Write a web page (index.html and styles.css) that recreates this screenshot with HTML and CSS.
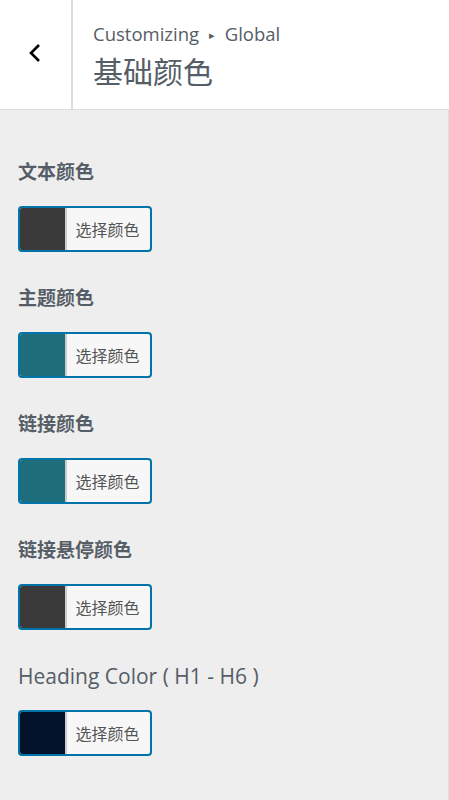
FILE: index.html
```html
<!DOCTYPE html>
<html lang="zh-CN">

<head>
    <meta charset="UTF-8">
    <meta name="viewport" content="width=device-width, initial-scale=1.0">
    <title>基础颜色</title>
    <link rel="stylesheet" href="styles.css">
</head>

<body>
<div class="panel">
    <div class="panel-header">
        <button class="back" type="button" aria-label="返回">
            <svg width="14" height="20" viewBox="0 0 14 20">
                <path d="M11 2 L3 10 L11 18" fill="none" stroke="#000" stroke-width="2.6"/>
            </svg>
        </button>
        <div class="panel-title">
            <div class="crumb">Customizing <span class="sep">&#9656;</span> Global</div>
            <h1>基础颜色</h1>
        </div>
    </div>

    <div class="controls">
        <div class="control">
            <div class="control-label">文本颜色</div>
            <button class="color-result" type="button">
                <span class="swatch" style="background-color: #3a3a3a"></span>
                <span class="color-text">选择颜色</span>
            </button>
        </div>

        <div class="control">
            <div class="control-label">主题颜色</div>
            <button class="color-result" type="button">
                <span class="swatch" style="background-color: #1e6d7b"></span>
                <span class="color-text">选择颜色</span>
            </button>
        </div>

        <div class="control">
            <div class="control-label">链接颜色</div>
            <button class="color-result" type="button">
                <span class="swatch" style="background-color: #1e6d7b"></span>
                <span class="color-text">选择颜色</span>
            </button>
        </div>

        <div class="control">
            <div class="control-label">链接悬停颜色</div>
            <button class="color-result" type="button">
                <span class="swatch" style="background-color: #3a3a3a"></span>
                <span class="color-text">选择颜色</span>
            </button>
        </div>

        <div class="control">
            <div class="control-label latin">Heading Color ( H1 - H6 )</div>
            <button class="color-result" type="button">
                <span class="swatch" style="background-color: #02122a"></span>
                <span class="color-text">选择颜色</span>
            </button>
        </div>
    </div>
</div>
</body>

</html>
```

FILE: styles.css
```css
body {
    margin: 0;
    font-family: 'Open Sans', 'Noto Sans CJK SC', sans-serif;
    background-color: #eee;
    color: #555d66;
}

.panel {
    width: 449px;
    min-height: 800px;
    box-sizing: border-box;
}

.panel-header {
    display: flex;
    height: 110px;
    box-sizing: border-box;
    background-color: #fff;
    border-bottom: 1px solid #ddd;
}

.back {
    width: 73px;
    flex: none;
    display: flex;
    align-items: center;
    justify-content: center;
    padding: 0 2px 4px 0;
    background: #fff;
    border: none;
    border-right: 2px solid #ddd;
    cursor: pointer;
}

.panel-title {
    padding: 21px 0 0 20px;
}

.crumb {
    font-size: 18.5px;
    line-height: 26px;
    color: #555d66;
}

.crumb .sep {
    font-size: 11px;
    vertical-align: 2px;
    margin: 0 5px;
}

.panel-title h1 {
    margin: 4px 0 0;
    font-size: 30px;
    font-weight: normal;
    line-height: 40px;
    color: #555d66;
}

.controls {
    padding: 49px 0 20px 18px;
    border-right: 1px solid #ddd;
    min-height: 690px;
    box-sizing: border-box;
}

.control {
    margin-bottom: 33px;
}

.control-label {
    font-size: 19px;
    font-weight: bold;
    line-height: 26px;
    margin-bottom: 21px;
}

.control-label.latin {
    font-size: 21px;
    font-weight: normal;
}

.color-result {
    display: flex;
    width: 134px;
    height: 46px;
    padding: 0;
    border: 2px solid #0073aa;
    border-radius: 4px;
    background-color: #f7f7f7;
    overflow: hidden;
    cursor: pointer;
}

.swatch {
    width: 45px;
    height: 100%;
    border-right: 2px solid #ccc;
}

.color-text {
    flex: 1;
    align-self: center;
    padding-right: 2px;
    font-family: 'Noto Sans CJK SC', sans-serif;
    font-size: 16px;
    color: #555;
    text-align: center;
}
```
